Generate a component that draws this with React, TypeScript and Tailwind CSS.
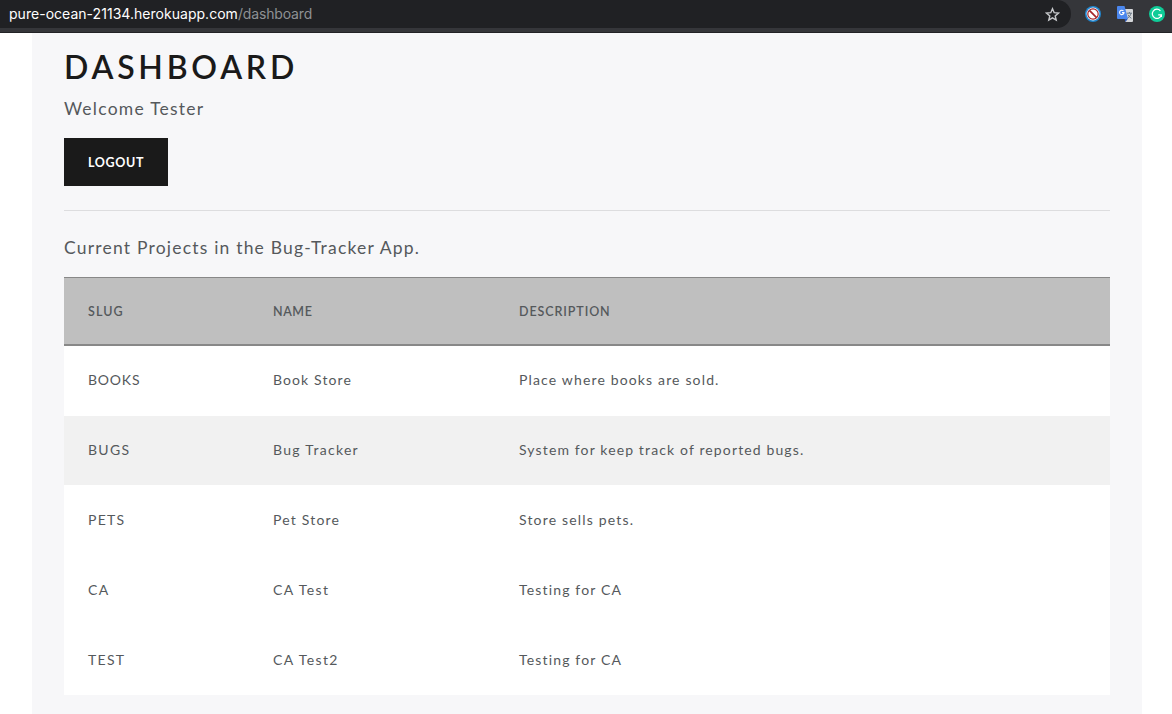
const rows = [
  { slug: 'BOOKS', name: 'Book Store', description: 'Place where books are sold.', cls: 'h-[70px] pb-[3px]', slugCls: 'tracking-[0.8px]', nameCls: 'tracking-[1.1px]', descCls: 'tracking-[1.15px]' },
  { slug: 'BUGS', name: 'Bug Tracker', description: 'System for keep track of reported bugs.', cls: 'h-[69px] pb-[3px] bg-[#f1f1f1]', slugCls: 'tracking-[1.3px]', nameCls: 'tracking-[1.3px]', descCls: 'tracking-[1.13px]' },
  { slug: 'PETS', name: 'Pet Store', description: 'Store sells pets.', cls: 'h-[70px] pb-[2px]', slugCls: 'tracking-[1.3px]', nameCls: 'tracking-[1.2px]', descCls: 'tracking-[1.17px]' },
  { slug: 'CA', name: 'CA Test', description: 'Testing for CA', cls: 'h-[70px] pb-[2px]', slugCls: 'tracking-[1.3px]', nameCls: 'tracking-[1.4px]', descCls: 'tracking-[1.16px]' },
  { slug: 'TEST', name: 'CA Test2', description: 'Testing for CA', cls: 'h-[70px] pb-[2px]', slugCls: 'tracking-[1.3px]', nameCls: 'tracking-[1.4px]', descCls: 'tracking-[1.16px]' },
];

const columns = 'grid grid-cols-[185px_246px_1fr] items-center px-6';

function BrowserBar() {
  return (
    <header className="flex h-[33px] shrink-0 border-b border-[#222326] bg-[#35363a]">
      <div className="flex h-7 w-[1071px] items-center justify-between rounded-r-full bg-[#202124] pr-[11px] pl-[9px]">
        <div className="font-['Inter',sans-serif] text-[14px] leading-7 whitespace-nowrap">
          <span className="tracking-[0.03px] text-white">pure-ocean-21134.herokuapp.com</span>
          <span className="tracking-[-0.15px] text-[#8e9194]">/dashboard</span>
        </div>
        <svg width="15" height="15" viewBox="0 0 15 15" fill="none" stroke="#c6c8cb" strokeWidth="1.4">
          <path d="M7.5 1.7 9.2 5.7 13.5 6.1 10.2 8.9 11.2 13.1 7.5 10.8 3.8 13.1 4.8 8.9 1.5 6.1 5.8 5.7Z" />
        </svg>
      </div>
      <div className="flex h-7 items-center pl-[14px]">
        <svg width="16" height="16" viewBox="0 0 16 16">
          <circle cx="8" cy="8" r="8" fill="#2186cf" />
          <circle cx="8" cy="8" r="6.4" fill="#fff" />
          <circle cx="8" cy="8" r="5.2" fill="#fff" stroke="#a4262a" strokeWidth="1.2" />
          <path d="m4.4 4.4 7.2 7.2" stroke="#a4262a" strokeWidth="1.7" />
        </svg>
        <svg className="ml-4" width="16" height="16" viewBox="0 0 16 16">
          <path d="M6 3h9a1 1 0 0 1 1 1v11a1 1 0 0 1-1 1H8.5Z" fill="#d5d7da" />
          <path d="M8.5 16 7.5 13h3.2Z" fill="#2c56b5" />
          <path d="M1 0h6.5l3.6 13H1a1 1 0 0 1-1-1V1a1 1 0 0 1 1-1Z" fill="#4b87ee" />
          <path d="M6.5 5A2.2 2.2 0 1 0 7 6.6H5" fill="none" stroke="#fff" strokeWidth="1.1" />
          <path d="M9.8 7.2H15M12.4 6v1.2M14 7.2c-.5 2.2-1.7 3.8-3.4 5M11 8.7c.7 1.5 1.8 2.7 3.4 3.6" fill="none" stroke="#687684" strokeWidth="1" />
        </svg>
        <svg className="ml-4" width="16" height="16" viewBox="0 0 16 16">
          <circle cx="8" cy="8" r="8" fill="#0fcc98" />
          <path d="M11.4 4.8A4.6 4.6 0 1 0 12.4 8.8H9.2M12.4 8.8V11" fill="none" stroke="#fff" strokeWidth="1.2" />
        </svg>
      </div>
    </header>
  );
}

export default function App() {
  return (
    <div className="flex h-[714px] w-[1172px] flex-col overflow-hidden bg-white font-['Lato',sans-serif] text-[#55595c]">
      <BrowserBar />
      <main className="ml-8 w-[1110px] flex-1 bg-[#f7f7f9] px-8">
        <h1 className="mt-[14px] h-[41px] text-[32px] leading-[40px] font-semibold tracking-[3.75px] text-[#1a1a1a]">DASHBOARD</h1>
        <p className="mt-2 h-[26px] text-[17.5px] leading-[26px] tracking-[1.24px]">Welcome Tester</p>
        <button className="mt-4 flex h-12 w-[104px] items-center justify-start bg-[#1a1a1a] pt-[2px] pl-6 text-[12.5px] font-bold tracking-[0.65px] text-white">LOGOUT</button>
        <hr className="mt-6 border-[#dddddf]" />
        <p className="mt-6 h-[26px] text-[17.5px] leading-[26px] tracking-[1.2px]">Current Projects in the Bug-Tracker App.</p>
        <div className="mt-4 bg-white text-[14px] tracking-[1px]">
          <div className={`${columns} h-[69px] border-t border-b-2 border-[#888888] bg-[#bfbfbf] pt-[2px] text-[12.5px] font-semibold`}>
            <span className="tracking-[1.1px]">SLUG</span>
            <span className="tracking-[0.6px]">NAME</span>
            <span className="tracking-[0.9px]">DESCRIPTION</span>
          </div>
          {rows.map((row) => (
            <div key={row.slug} className={`${columns} ${row.cls}`}>
              <span className={row.slugCls}>{row.slug}</span>
              <span className={row.nameCls}>{row.name}</span>
              <span className={row.descCls}>{row.description}</span>
            </div>
          ))}
        </div>
      </main>
    </div>
  );
}
